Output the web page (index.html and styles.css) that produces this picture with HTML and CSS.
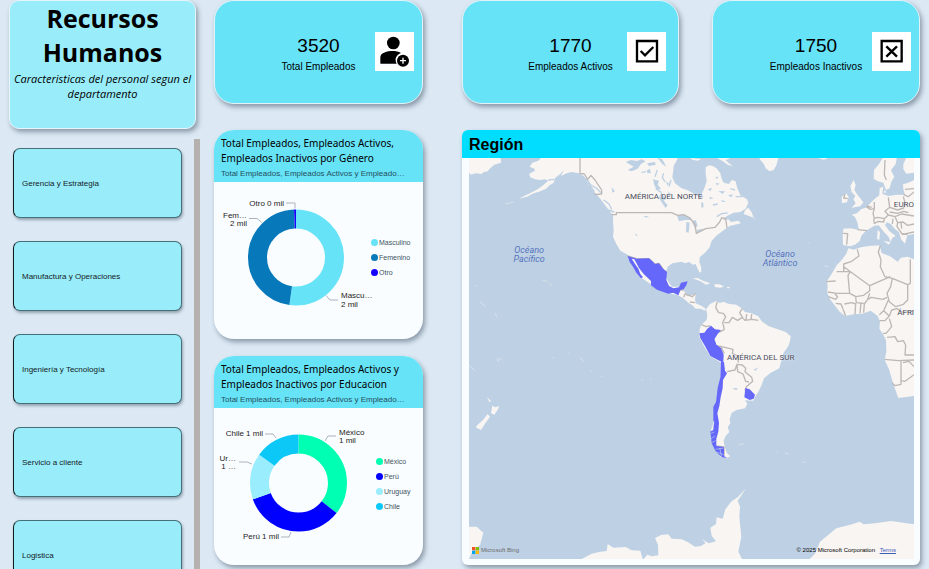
FILE: index.html
```html
<!DOCTYPE html>
<html lang="es">
<head>
<meta charset="utf-8">
<meta name="viewport" content="width=device-width, initial-scale=1">
<title>Recursos Humanos</title>
<link rel="stylesheet" href="styles.css">
</head>
<body>
<div class="dashboard">
  <aside class="sidebar">
    <header class="intro">
      <h1>Recursos Humanos</h1>
      <p>Caracteristicas del personal segun el departamento</p>
    </header>
    <nav class="departments" aria-label="Departamentos">
      <button type="button">Gerencia y Estrategia</button>
      <button type="button">Manufactura y Operaciones</button>
      <button type="button">Ingeniería y Tecnología</button>
      <button type="button">Servicio a cliente</button>
      <button type="button">Logistica</button>
    </nav>
  </aside>

  <main class="charts">
    <section class="kpi">
      <div class="kpi-text"><strong>3520</strong><span>Total Empleados</span></div>
      <svg class="kpi-icon" viewBox="0 0 117 117" aria-hidden="true">
        <circle cx="55" cy="33" r="19"/>
        <path d="M16 95V76C16 62 38 57 52 57C62 57 71 59 78 63C68 67 61 75 62 85C62 89 63 92 65 95Z"/>
        <circle cx="84" cy="86" r="18"/>
        <path d="M84 77v18M75 86h18" stroke="#fff" stroke-width="4" fill="none"/>
      </svg>
    </section>
    <section class="card chart">
      <header class="card-head">
        <h2>Total Empleados, Empleados Activos, Empleados Inactivos por Género</h2>
        <p>Total Empleados, Empleados Activos y Empleado…</p>
      </header>
      <div class="plot">
        <svg class="donut" viewBox="214 182 157 156" role="img" aria-label="Empleados por género">
          <g class="ring" transform="rotate(-90 296 257)">
            <circle cx="296" cy="257" r="38.5" pathLength="360" stroke="#67e3f8" stroke-dasharray="188 172"/>
            <circle cx="296" cy="257" r="38.5" pathLength="360" stroke="#0779ba" stroke-dasharray="169.6 190.4" stroke-dashoffset="-188"/>
            <circle cx="296" cy="257" r="38.5" pathLength="360" stroke="#1500ff" stroke-dasharray="2.4 357.6" stroke-dashoffset="-357.6"/>
          </g>
          <path class="leader" d="M286 202.500H295V208M249 218H257L262 222M326 295L330 299.500H338"/>
          <text x="284" y="205" text-anchor="end">Otro 0 mil</text>
          <text x="247" y="217" text-anchor="end">Fem…</text>
          <text x="247" y="225" text-anchor="end">2 mil</text>
          <text x="341" y="297">Mascu…</text>
          <text x="341" y="306">2 mil</text>
        </svg>
        <ul class="legend">
          <li><i class="dot masculino"></i>Masculino</li>
          <li><i class="dot femenino"></i>Femenino</li>
          <li><i class="dot otro"></i>Otro</li>
        </ul>
      </div>
    </section>
    <section class="card chart">
      <header class="card-head">
        <h2>Total Empleados, Empleados Activos y Empleados Inactivos por Educacion</h2>
        <p>Total Empleados, Empleados Activos y Empleado…</p>
      </header>
      <div class="plot">
        <svg class="donut" viewBox="214 408 157 157" role="img" aria-label="Empleados por país">
          <g class="ring" transform="rotate(-90 298.500 483)">
            <circle cx="298.500" cy="483" r="39" pathLength="360" stroke="#00ffb3" stroke-dasharray="128.300 231.700"/>
            <circle cx="298.500" cy="483" r="39" pathLength="360" stroke="#0000ff" stroke-dasharray="122 238" stroke-dashoffset="-128.300"/>
            <circle cx="298.500" cy="483" r="39" pathLength="360" stroke="#99edfc" stroke-dasharray="55.500 304.500" stroke-dashoffset="-250.300"/>
            <circle cx="298.500" cy="483" r="39" pathLength="360" stroke="#0cc8f7" stroke-dasharray="54.200 305.800" stroke-dashoffset="-305.800"/>
          </g>
          <path class="leader" d="M265 434H273L276 438M325 441L328 436H336M239 462H247L252 464M281 537H289L291 532"/>
          <text x="263" y="436" text-anchor="end">Chile 1 mil</text>
          <text x="339" y="435">México</text>
          <text x="339" y="443">1 mil</text>
          <text x="236" y="461" text-anchor="end">Ur…</text>
          <text x="236" y="469" text-anchor="end">1 …</text>
          <text x="279" y="539" text-anchor="end">Perú 1 mil</text>
        </svg>
        <ul class="legend legend-country">
          <li><i class="dot mexico"></i>México</li>
          <li><i class="dot peru"></i>Perú</li>
          <li><i class="dot uruguay"></i>Uruguay</li>
          <li><i class="dot chile"></i>Chile</li>
        </ul>
      </div>
    </section>
  </main>

  <section class="overview">
    <div class="kpi-row">
      <section class="kpi kpi-active">
        <div class="kpi-text"><strong>1770</strong><span>Empleados Activos</span></div>
        <svg class="kpi-icon" viewBox="0 0 117 117" aria-hidden="true">
          <path class="frame" d="M30 27H90V88H30Z"/>
          <path class="mark" d="M41 57L54 70L79 45"/>
        </svg>
      </section>
      <section class="kpi">
        <div class="kpi-text"><strong>1750</strong><span>Empleados Inactivos</span></div>
        <svg class="kpi-icon" viewBox="0 0 117 117" aria-hidden="true">
          <path class="frame" d="M29 27H89V88H29Z"/>
          <path class="mark" d="M43 43L75 74M75 43L43 74"/>
        </svg>
      </section>
    </div>
    <section class="card region">
      <h2>Región</h2>
      <div class="map">
        <svg viewBox="42 114 1335 1203" preserveAspectRatio="xMidYMid slice" role="img" aria-label="Mapa de empleados por país">
          <g class="land">
            <path d="M42 114H137L138 128L118 134L104 146L98 154L85 157L80 162L62 160L48 164L42 158Z"/>
            <path d="M258 114L250 122L232 128L224 140L238 146L240 152L222 162L226 172L240 178L256 180L270 178L280 182L264 196L250 206L228 218L212 226L192 236L216 230L236 220L252 215L272 207L284 196L296 188L300 174L316 162L326 150L318 168L335 160L350 156L372 160L386 168L396 180L400 196L410 200L420 218L436 236L446 250L452 258L466 276L474 285L474 305L476 330L474 350L484 372L496 392L518 404L530 420L560 475L600 500L640 520L667 525L684 534L700 548L712 556L722 566L736 566L750 572L752 566L740 558L722 550L720 536L722 522L700 528L690 518L684 508L697 487L675 500L650 500L634 475L634 455L638 440L652 430L680 425L690 430L702 426L714 434L722 432L728 446L734 458L739 455L738 440L733 425L734 412L750 398L764 382L770 362L784 347L798 337L812 326L824 318L858 310L850 302L828 306L820 298L802 300L816 288L836 278L856 276L872 266L880 248L876 238L856 226L846 202L842 184L830 180L822 192L806 188L800 176L796 160L786 146L774 138L762 136L752 142L752 160L755 184L748 205L740 222L745 232L736 234L724 226L712 218L696 210L680 205L660 190L652 172L655 150L656 138L664 124L668 114Z"/>
            <path d="M705 114L738 117L729 122L712 119ZM786 114H826L812 121L822 130L834 139L818 134L804 124ZM913 114H970L964 136L956 150L944 154L932 145L926 131L918 122ZM1088 114H1119L1107 119Z"/>
            <path d="M866 282L870 271L880 263L890 277L896 293L880 287Z"/>
            <path d="M713 475L728 474L744 482L766 490L754 494L736 484ZM778 493L792 493L807 499L797 503L780 501ZM816 501H825L823 505H816Z"/>
            <path d="M753 568L765 552L783 543L795 549L805 545L820 551L844 554L860 565L870 576L890 580L910 589L920 604L940 618L968 628L992 636L1007 649L1005 662L1000 678L985 700L973 745L945 760L927 775L920 795L910 815L900 830L895 842L870 841L877 852L870 865L845 870L830 878L824 898L826 910L818 922L823 936L812 948L806 962L809 980L816 1000L826 1009L814 1014L797 1011L783 990L772 965L768 930L777 905L776 878L783 855L788 815L796 775L798 728L765 708L748 680L733 650L734 628L739 614L755 600L757 584Z"/>
            <path d="M1180 385L1196 389L1218 382L1242 378L1274 376L1280 399L1305 409L1328 425L1338 413L1358 410L1377 418V828L1330 834L1320 806L1310 775L1302 748L1289 720L1294 695L1293 660L1284 643L1273 626L1275 605L1268 588L1247 572L1222 581L1196 583L1170 588L1154 575L1140 557L1125 538L1116 517L1118 500L1116 483L1134 455L1145 436L1160 420L1174 401Z"/>
            <path d="M1165 326L1186 325L1212 330L1207 307L1200 291L1190 284L1206 280L1218 268L1235 262L1250 245L1263 233L1273 226L1274 204L1285 200L1282 221L1300 228L1325 224L1350 225L1345 208L1344 193L1360 188L1377 180V342L1357 346L1350 371L1339 359L1332 337L1319 326L1308 313L1296 307L1290 314L1302 332L1322 348L1312 353L1307 366L1301 351L1285 334L1271 316L1258 317L1246 325L1233 332L1220 346L1214 363L1200 374L1185 379L1164 375L1163 350Z"/>
            <path d="M1186 198L1196 180L1202 195L1198 211L1208 225L1225 247L1216 259L1190 263L1202 250L1195 238L1201 228L1190 216ZM1160 230L1174 220L1181 231L1176 247L1161 250ZM1285 362L1307 367L1301 374ZM1268 330L1275 336L1273 359L1266 357Z"/>
            <path d="M1257 150L1272 132L1283 114H1325L1322 132L1308 151L1318 170L1309 185L1304 205L1293 210L1285 188L1269 184L1256 177ZM1345 133L1353 114H1377V158L1354 161L1345 148ZM1288 210L1295 217L1287 219Z"/>
            <path d="M112 857L120 862L132 858L129 868L118 884L108 880ZM98 882L105 890L92 908L78 930L62 922L68 914L84 900ZM96 831L108 844L103 846Z"/>
            <path d="M42 1220H65L85 1238L80 1258L75 1275L50 1300L42 1317ZM380 1317L410 1301L432 1296L455 1293L458 1272L475 1283L512 1281L530 1291L556 1292L563 1317ZM566 1317L577 1304L590 1309L610 1306L609 1275L600 1254L618 1245L640 1243L650 1256L680 1258L698 1266L720 1280L738 1278L752 1269L741 1258L762 1270L783 1264L770 1247L766 1223L783 1212L785 1192L803 1196L811 1168L830 1144L848 1132L873 1105L848 1142L855 1160L853 1192L859 1250L850 1295L861 1317ZM1064 1317L1080 1301L1095 1265L1144 1225L1186 1214L1214 1205L1226 1213L1260 1210L1308 1203L1377 1213V1317Z"/>
            <path class="specks" d="M262 480L278 485M284 488L290 498M42 735L60 752M125 717H140M126 722L133 723M150 252L175 246M850 974L866 971M990 999L1001 1002M1042 1027H1050M897 294L902 298M1058 369H1062M1108 438L1120 440M965 996H968M60 495L64 499M292 713H296M341 700H345M375 714L387 725M407 753H411M438 769H442M560 781H564M585 777H589M75 545L90 560M120 580L126 592"/>
          </g>
          <g class="water">
            <path d="M512 126L528 120L546 123L560 118L572 124L558 132L548 146L530 154L518 150L536 140ZM575 152L584 146L588 158L578 160ZM594 178L612 182L608 194L618 206L606 210L598 196ZM618 218L634 236L626 242L638 256L632 264L622 250L612 234ZM470 202L480 214L472 218ZM634 184L643 192L636 196ZM576 130L600 126L602 134L582 138ZM666 286L684 284L704 292L710 300L690 300L672 304ZM694 306L704 308L701 338L693 336ZM710 304L722 300L728 318L720 324ZM724 330L746 326L740 334L726 336ZM540 338L548 348L543 348ZM565 288L582 289L574 293ZM638 214L650 224L642 228ZM606 112L622 118L634 140L622 132ZM758 207L771 204L766 214ZM782 188L794 191L786 196ZM790 213L810 214L803 222ZM763 230L776 235L765 238ZM819 226L834 223L829 232ZM798 240L813 244L803 247ZM738 250L744 246L746 260L740 264ZM780 171L789 170L787 178ZM835 804L848 805L845 810L836 808ZM896 749L910 742L902 752Z"/>
            <path class="creeks" d="M394 176L408 196L424 204L438 218M398 188L418 214M446 240L462 252L470 268M460 270L478 276M540 128L552 138M600 170L607 150M626 160L622 172L630 186M648 180L642 200M560 158L572 154M602 206L620 218M280 180L298 178M774 255L788 252M785 290L800 281L818 279M826 206L840 210M842 230L862 230"/>
          </g>
          <g class="borders">
            <path d="M375 114V160L388 162L398 178L408 166L420 180L440 210V222L418 224M470 284H484V278H650L668 286L686 284L705 294L720 314L724 340L752 326L780 322L794 306L800 293L812 296L816 324M518 408L545 416H582L600 432L612 430L626 450L636 456M668 523L676 510L686 510M686 532L690 522L712 530L722 520M705 546L720 548"/>
            <path d="M787 545L782 562L791 578L805 580L812 590L803 608L808 628L798 634L780 640L776 655L783 677L800 680M739 614L754 620L766 617M808 608H822L832 592L848 601L862 592L854 578L862 566M862 592L870 601L892 598L910 601M875 582L873 600M890 582L888 600M796 678L808 700M816 755L840 750L846 733L862 735L872 745L870 755L890 772L893 784L874 800L870 812M846 733L848 755L864 762L872 784L882 786M800 680L834 688L832 700L848 708L850 728M784 978L807 981V1008"/>
            <path d="M1207 388L1212 408L1190 424L1166 432V455H1145M1166 440L1244 497L1306 470M1166 455H1186L1179 466L1184 520H1145L1118 516M1184 520L1203 530L1226 526L1244 512V497M1276 376L1270 396L1278 420L1276 440L1290 470L1312 475L1358 494L1366 490V418M1312 475L1307 500L1296 520L1303 545L1322 560L1345 553L1358 540V494M1244 520L1238 538L1249 532L1284 538L1296 532M1238 538L1228 552L1226 578M1300 540L1286 572L1273 584M1286 572L1303 588L1310 570L1326 566L1345 578L1377 572M1273 602H1290L1303 588M1303 596L1310 620L1293 640H1284M1296 652L1320 650L1328 665L1345 662L1352 675L1350 705H1377M1289 718L1330 722L1377 720M1338 722V793L1320 797L1312 790M1344 728L1362 724L1377 740M1338 782L1350 784L1377 764M1114 485L1142 483M1120 530L1142 538L1148 530L1140 522M1142 550L1158 552L1164 567M1164 568L1172 588M1168 552L1190 548L1202 552L1200 583M1218 548L1215 580M1202 532L1204 548L1226 550"/>
            <path d="M1164 340L1178 341L1175 374M1208 329L1236 332M1234 260L1246 268L1258 266V246M1236 258L1250 262M1258 266L1254 280L1258 295L1268 292L1288 296L1300 285L1290 274L1304 262L1300 232M1304 262L1328 270L1346 264L1350 248L1345 230M1300 285L1320 290L1340 282L1377 288M1288 296L1286 306L1270 304L1258 310L1256 296M1320 290L1328 308L1344 306L1358 316L1377 312M1328 308L1326 320L1340 340L1358 344M1312 312L1314 296M1338 306L1340 326M1290 120L1288 165L1294 180M1350 208L1377 206M1346 224L1360 230L1377 216M1170 222L1166 234L1178 236M1340 344L1377 336M1304 276L1328 280L1346 274L1360 278"/>
          </g>
          <g class="staff">
            <path d="M518 408L545 416L582 415L592 424L600 432L612 430L624 446L636 456L634 480L642 498L655 505L672 502L678 488L698 484L694 496L686 508L676 510L670 526L655 518L640 521L606 509L588 496V483L566 462L552 444L538 418L530 416L540 432L550 446L556 462L564 472L558 475L544 458L534 440L524 426Z"/>
            <path d="M733 640L748 638L757 626L768 617L780 628L798 630L788 642L778 658L784 674L798 684L806 704L805 725L796 724L766 708L750 678L736 654Z"/>
            <path d="M798 722L807 726L810 752L816 760L804 780L803 804L797 832L793 858L787 880L792 908L790 935L784 956L784 978L807 981V1008L816 1014L800 1012L782 994L770 970L766 934L774 930L778 905L775 902V860L783 846L788 804L796 772Z"/>
            <path d="M871 804L884 808L900 824L896 836L884 840L868 832Z"/>
          </g>
          <path class="fjords" d="M768 940L778 936M768 956L780 948M770 968L782 962M782 988L806 984M784 996L806 1004M794 984L800 1012M770 934L777 925"/>
        </svg>
        <span class="place north">AMÉRICA DEL NORTE</span>
        <span class="place south">AMÉRICA DEL SUR</span>
        <span class="place europe">EURO</span>
        <span class="place africa">ÁFRI</span>
        <span class="ocean pacific">Océano<br>Pacífico</span>
        <span class="ocean atlantic">Océano<br>Atlántico</span>
        <div class="map-foot">
          <span class="bing"><svg viewBox="0 0 21 21" aria-hidden="true"><path fill="#f35325" d="M0 0h10v10H0z"/><path fill="#81bc06" d="M11 0h10v10H11z"/><path fill="#05a6f0" d="M0 11h10v10H0z"/><path fill="#ffba08" d="M11 11h10v10H11z"/></svg>Microsoft Bing</span>
          <span class="rights">© 2025 Microsoft Corporation <a href="#terms">Terms</a></span>
        </div>
      </div>
    </section>
  </section>
</div>
</body>
</html>
```
FILE: styles.css
```css
* {
  box-sizing: border-box;
}

:root {
  --sky: #67e3f8;
  --pale: #99edfa;
  --panel: #fafdff;
  --shadow: 2px 3px 5px rgba(40, 55, 75, 0.45);
}

body {
  margin: 0;
  background: #dce9f5;
  color: #000;
  font-family: "Liberation Sans", Arial, sans-serif;
}

h1,
h2,
p,
ul {
  margin: 0;
  padding: 0;
}

.dashboard {
  display: grid;
  grid-template-columns: minmax(0, 191fr) minmax(0, 209fr) minmax(0, 483fr);
  column-gap: 14px;
  height: 100vh;
  padding: 0 9px 4px;
}

.sidebar {
  display: flex;
  flex-direction: column;
  min-height: 0;
  margin-bottom: -4px;
}

.intro {
  flex: none;
  min-height: 129px;
  margin-right: 4px;
  padding: 0 4px;
  border: 1px solid #e6f5fb;
  border-radius: 10px;
  background: var(--pale);
  box-shadow: var(--shadow);
  text-align: center;
  font-family: "Open Sans", "Noto Sans", sans-serif;
}

.intro h1 {
  font-size: 25px;
  line-height: 34px;
}

.intro p {
  margin-top: 2px;
  font-size: 11px;
  line-height: 15px;
  font-style: italic;
}

.departments {
  display: flex;
  flex: 1;
  flex-direction: column;
  gap: 23px;
  min-height: 0;
  margin-top: 10px;
  padding: 9px 12px 0 4px;
  overflow-y: auto;
  scrollbar-width: none;
  border-right: 6px solid #b5b1af;
}

.departments button {
  flex: none;
  height: 70px;
  padding: 0 8px;
  border: 1px solid #447078;
  border-left-color: #101c1e;
  border-radius: 7px;
  background: var(--pale);
  box-shadow: 1px 2px 3px rgba(40, 55, 75, 0.4);
  color: #142226;
  font: 8px "Liberation Sans", Arial, sans-serif;
  text-align: left;
}

.charts,
.overview {
  display: flex;
  flex-direction: column;
  min-height: 0;
}

.charts {
  gap: 17px;
}

.charts .kpi {
  margin-bottom: 9px;
}

.overview {
  gap: 26px;
  margin-left: 25px;
}

.kpi-row {
  display: grid;
  grid-template-columns: 217fr 208fr;
  gap: 33px;
}

.kpi {
  display: grid;
  flex: none;
  grid-template-columns: 1fr auto 1fr;
  align-items: center;
  height: 104px;
  padding: 0 8px 2px;
  border: 1px solid #e0f3fa;
  border-radius: 20px;
  background: var(--sky);
  box-shadow: var(--shadow);
}

.kpi-active {
  padding: 0 12px 2px;
}

.kpi-text {
  display: grid;
  grid-column: 2;
  row-gap: 4px;
  padding-top: 6px;
  text-align: center;
}

.kpi-text strong {
  font-size: 19px;
  font-weight: 400;
  line-height: 22px;
}

.kpi-text span {
  font-size: 10px;
  line-height: 12px;
}

.kpi-icon {
  justify-self: end;
  width: 39px;
  height: 39px;
  background: #fff;
}

.frame,
.mark {
  fill: none;
  stroke: #000;
  stroke-width: 7;
}

.card {
  display: flex;
  flex: 1;
  flex-direction: column;
  min-height: 0;
  background: var(--panel);
  box-shadow: var(--shadow);
}

.chart {
  border-radius: 20px;
}

.card-head {
  padding: 6px 7px 0;
  border-radius: 20px 20px 0 0;
  background: var(--sky);
}

.card-head h2 {
  font: 400 10px/15px "Noto Sans", sans-serif;
}

.card-head p {
  color: #23505c;
  font-size: 8px;
  line-height: 16px;
  white-space: nowrap;
}

.plot {
  display: flex;
  flex: 1;
  align-items: center;
  min-height: 0;
}

.donut {
  flex: 1;
  min-width: 0;
  height: 100%;
  overflow: visible;
}

.ring circle {
  fill: none;
  stroke-width: 19;
}

.leader {
  fill: none;
  stroke: #a9b3bd;
}

.donut text {
  fill: #252423;
  font-size: 8px;
}

.legend {
  display: grid;
  flex: none;
  width: 52px;
  padding-bottom: 6px;
  color: #405360;
  font-size: 7px;
  line-height: 15px;
  list-style: none;
}

.legend-country {
  padding-left: 5px;
}

.legend li {
  display: flex;
  align-items: center;
  gap: 1px;
}

.dot {
  width: 7px;
  height: 7px;
  border-radius: 50%;
}

.masculino {
  background: #67e3f8;
}

.femenino {
  background: #0779ba;
}

.otro {
  background: #1500ff;
}

.mexico {
  background: #00ffb3;
}

.peru {
  background: #0000ff;
}

.uruguay {
  background: #99edfc;
}

.chile {
  background: #0cc8f7;
}

.region {
  padding-bottom: 6px;
  border-radius: 6px;
}

.region h2 {
  flex: none;
  padding: 2px 7px 0;
  border-radius: 6px 6px 0 0;
  background: #00ddff;
  font-size: 16px;
  line-height: 26px;
}

.map {
  position: relative;
  flex: 1;
  min-height: 0;
  margin: 0 6px 0 7px;
  overflow: hidden;
  background: #bed1e4;
}

.map > svg {
  display: block;
  width: 100%;
  height: 100%;
}

.land {
  fill: #f8f5f2;
}

.specks {
  fill: none;
  stroke: #e3eaee;
  stroke-width: 2;
}

.water {
  fill: #bed1e4;
}

.creeks {
  fill: none;
  stroke: #bed1e4;
  stroke-width: 4;
}

.borders {
  fill: none;
  stroke: #bdb8b6;
  stroke-width: 4;
  stroke-linejoin: round;
}

.staff {
  fill: #6467fa;
}

.fjords {
  fill: none;
  stroke: #bed1e4;
  stroke-width: 2;
}

.place,
.ocean {
  position: absolute;
  font-family: Roboto, sans-serif;
  white-space: nowrap;
}

.place {
  color: #4b4b59;
  font-size: 8px;
  line-height: 10px;
  text-shadow: 0 0 2px #fff;
}

.north {
  left: 35%;
  bottom: 89%;
}

.south {
  left: 58%;
  bottom: 49%;
}

.europe {
  right: 0;
  bottom: 87%;
}

.africa {
  right: 0;
  bottom: 60%;
}

.ocean {
  color: #5673bd;
  font-size: 9px;
  font-style: italic;
  line-height: 9px;
  text-align: center;
}

.pacific {
  left: 10%;
  top: 22%;
}

.atlantic {
  left: 66%;
  top: 23%;
}

.map-foot {
  position: absolute;
  right: 18px;
  bottom: 4px;
  left: 3px;
  display: flex;
  align-items: center;
  justify-content: space-between;
  font-size: 6px;
  line-height: 10px;
}

.bing {
  display: flex;
  align-items: center;
  gap: 2px;
  color: #6b6b6b;
}

.bing svg {
  width: 7px;
  height: 7px;
}

.rights a {
  margin-left: 3px;
  color: #3c5bb5;
}
```
